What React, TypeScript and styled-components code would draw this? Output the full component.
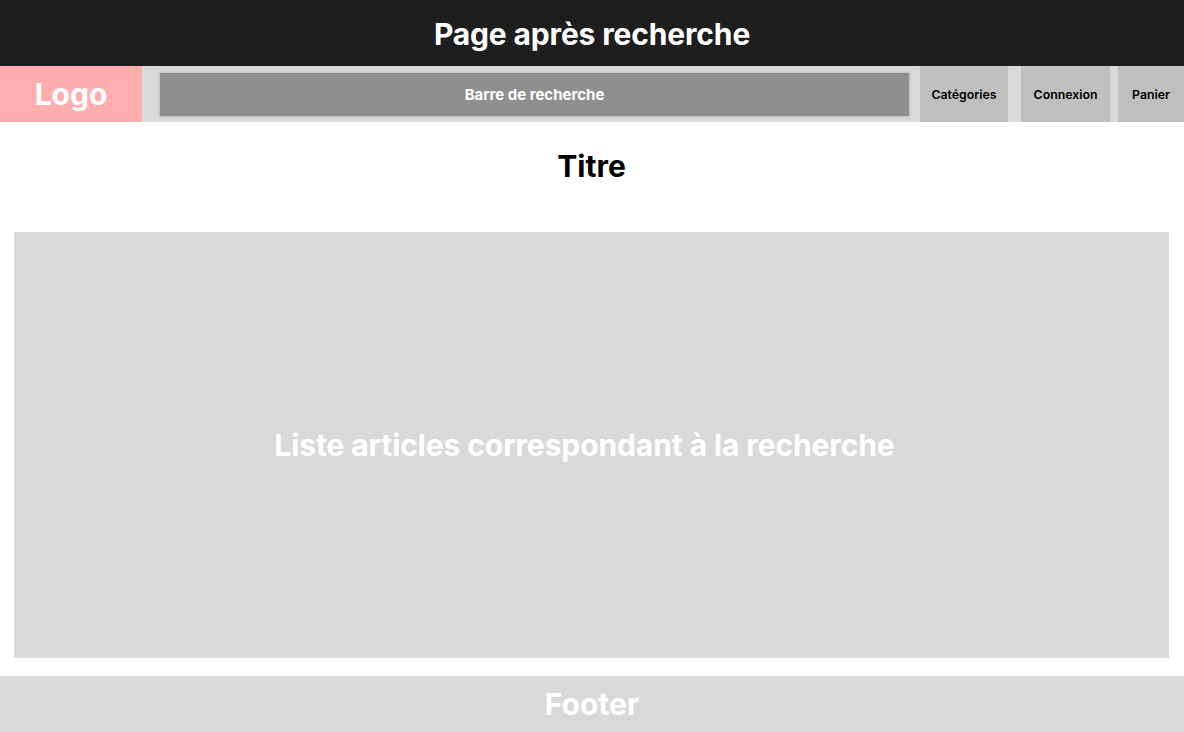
import React from "react";
import styled, { createGlobalStyle } from "styled-components";

const GlobalStyle = createGlobalStyle`
  html, body { margin: 0; padding: 0; background: #ffffff; }
  body { font-family: Inter, "Noto Sans", sans-serif; }
  * { box-sizing: border-box; }
`;

const Page = styled.div`
  display: flex;
  flex-direction: column;
  width: 1184px;
  height: 732px;
  overflow: hidden;
`;

const Header = styled.header`
  height: 66px;
  padding-top: 2px;
  background: #1e1e1e;
  color: #ffffff;
  display: flex;
  align-items: center;
  justify-content: center;
  font-weight: 700;
  font-size: 30px;
  letter-spacing: -0.15px;
`;

const Nav = styled.nav`
  height: 56px;
  background: #d9d9d9;
  display: flex;
  align-items: stretch;
`;

const Logo = styled.div`
  width: 142px;
  background: #ffadad;
  color: #ffffff;
  font-weight: 700;
  font-size: 30px;
  display: flex;
  align-items: center;
  justify-content: center;
`;

const SearchWrap = styled.div`
  flex: 1;
  padding: 7px 11px 6px 18px;
  display: flex;
`;

const Search = styled.div`
  flex: 1;
  background: #8f8f8f;
  box-shadow: 0 0 2px 1px rgba(0, 0, 0, 0.12);
  color: #ffffff;
  font-weight: 700;
  font-size: 15px;
  display: flex;
  align-items: center;
  justify-content: center;
`;

const NavButton = styled.div<{ $w: number; $ml: number }>`
  width: ${(p) => p.$w}px;
  margin-left: ${(p) => p.$ml}px;
  background: #bfbfbf;
  color: #000000;
  font-weight: 600;
  font-size: 12.3px;
  display: flex;
  align-items: center;
  justify-content: center;
`;

const Main = styled.main`
  flex: 1;
  display: flex;
  flex-direction: column;
  padding: 0 15px 18px 14px;
`;

const Title = styled.h1`
  margin: 0;
  height: 110px;
  padding-top: 26px;
  text-align: center;
  font-weight: 700;
  font-size: 30px;
  line-height: 36px;
  color: #000000;
`;

const ResultBox = styled.section`
  flex: 1;
  background: #d9d9d9;
  color: #ffffff;
  font-weight: 700;
  font-size: 30px;
  letter-spacing: -0.1px;
  display: flex;
  align-items: center;
  justify-content: center;
  padding: 0 14px 1px 0;
`;

const Footer = styled.footer`
  height: 56px;
  background: #d9d9d9;
  color: #ffffff;
  font-weight: 700;
  font-size: 30px;
  display: flex;
  align-items: center;
  justify-content: center;
`;

export default function App() {
  return (
    <>
      <GlobalStyle />
      <Page>
        <Header>Page après recherche</Header>
        <Nav>
          <Logo>Logo</Logo>
          <SearchWrap>
            <Search>Barre de recherche</Search>
          </SearchWrap>
          <NavButton $w={88} $ml={0}>Catégories</NavButton>
          <NavButton $w={89} $ml={13}>Connexion</NavButton>
          <NavButton $w={66} $ml={8}>Panier</NavButton>
        </Nav>
        <Main>
          <Title>Titre</Title>
          <ResultBox>Liste articles correspondant à la recherche</ResultBox>
        </Main>
        <Footer>Footer</Footer>
      </Page>
    </>
  );
}
